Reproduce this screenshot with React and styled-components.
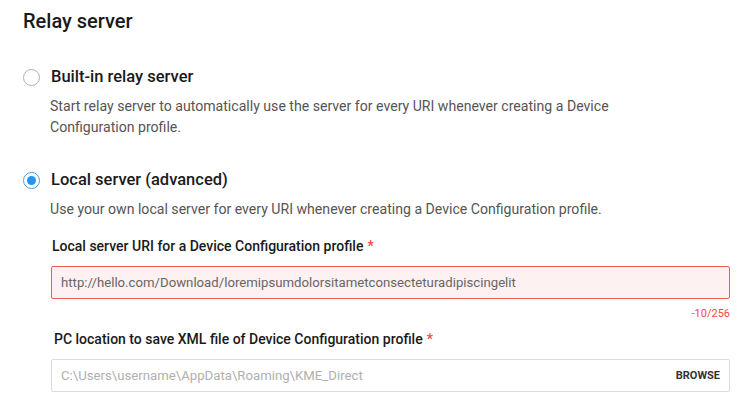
import React, { useState } from "react";
import styled, { createGlobalStyle } from "styled-components";

const GlobalStyle = createGlobalStyle`
  body {
    margin: 0;
    background: #fff;
    font-family: "Roboto", "Noto Sans", sans-serif;
    color: #222;
  }
`;

const Page = styled.div`
  padding: 8px 26px 0 23px;
`;

const Title = styled.h2`
  margin: 0 0 32px;
  font-size: 20px;
  line-height: 26px;
  font-weight: 500;
  color: #1a1a1a;
`;

const Option = styled.div`
  margin-bottom: 31px;
`;

const OptionHead = styled.label`
  display: flex;
  align-items: center;
  gap: 11px;
  cursor: pointer;
`;

const Radio = styled.span`
  box-sizing: border-box;
  width: 17px;
  height: 17px;
  border-radius: 50%;
  border: 1.5px solid ${(p) => (p.$checked ? "#3ea0ee" : "#b0b0b0")};
  display: flex;
  align-items: center;
  justify-content: center;
  flex-shrink: 0;

  &::after {
    content: "";
    width: 9px;
    height: 9px;
    border-radius: 50%;
    background: #2196f3;
    display: ${(p) => (p.$checked ? "block" : "none")};
  }
`;

const OptionLabel = styled.span`
  font-size: 16.5px;
  line-height: 22px;
  font-weight: 500;
  color: #1a1a1a;
`;

const Description = styled.p`
  margin: 8px 0 0 27px;
  font-size: 14.1px;
  line-height: 21px;
  color: #555;
`;

const Field = styled.div`
  margin: ${(p) => p.$top}px 0 0 28px;
`;

const FieldLabel = styled.div`
  margin-left: ${(p) => p.$indent || 1}px;
  font-size: 14px;
  line-height: 20px;
  font-weight: 500;
  color: #1a1a1a;
  margin-bottom: 10px;
`;

const Required = styled.span`
  color: #f04848;
  margin-left: 4px;
`;

const InputBox = styled.div`
  box-sizing: border-box;
  height: 33px;
  display: flex;
  align-items: center;
  padding: 0 9px;
  border-radius: 2px;
  border: 1px solid ${(p) => (p.$error ? "#f15a5a" : "#dcdcdc")};
  background: ${(p) => (p.$error ? "#fdf1f1" : "#fff")};
`;

const InputText = styled.span`
  flex: 1;
  font-size: 13.2px;
  color: ${(p) => (p.$placeholder ? "#b0b0b0" : "#666")};
  white-space: nowrap;
  overflow: hidden;
`;

const Counter = styled.div`
  text-align: right;
  font-size: 11px;
  line-height: 14px;
  color: #f04848;
  margin-top: 8px;
`;

const BrowseButton = styled.button`
  border: 0;
  background: none;
  padding: 0;
  font-family: inherit;
  font-size: 11px;
  font-weight: 700;
  color: #333;
  cursor: pointer;
`;

export default function App() {
  const [mode, setMode] = useState("local");

  return (
    <>
      <GlobalStyle />
      <Page>
        <Title>Relay server</Title>

        <Option>
          <OptionHead onClick={() => setMode("builtin")}>
            <Radio $checked={mode === "builtin"} />
            <OptionLabel>Built-in relay server</OptionLabel>
          </OptionHead>
          <Description>
            Start relay server to automatically use the server for every URI whenever creating a Device
            <br />
            Configuration profile.
          </Description>
        </Option>

        <Option>
          <OptionHead onClick={() => setMode("local")}>
            <Radio $checked={mode === "local"} />
            <OptionLabel>Local server (advanced)</OptionLabel>
          </OptionHead>
          <Description>
            Use your own local server for every URI whenever creating a Device Configuration profile.
          </Description>

          <Field $top={16}>
            <FieldLabel>
              Local server URI for a Device Configuration profile<Required>*</Required>
            </FieldLabel>
            <InputBox $error>
              <InputText>http://hello.com/Download/loremipsumdolorsitametconsecteturadipiscingelit</InputText>
            </InputBox>
            <Counter>-10/256</Counter>
          </Field>

          <Field $top={8}>
            <FieldLabel $indent={3}>
              PC location to save XML file of Device Configuration profile<Required>*</Required>
            </FieldLabel>
            <InputBox>
              <InputText $placeholder>C:\Users\username\AppData\Roaming\KME_Direct</InputText>
              <BrowseButton>BROWSE</BrowseButton>
            </InputBox>
          </Field>
        </Option>
      </Page>
    </>
  );
}
